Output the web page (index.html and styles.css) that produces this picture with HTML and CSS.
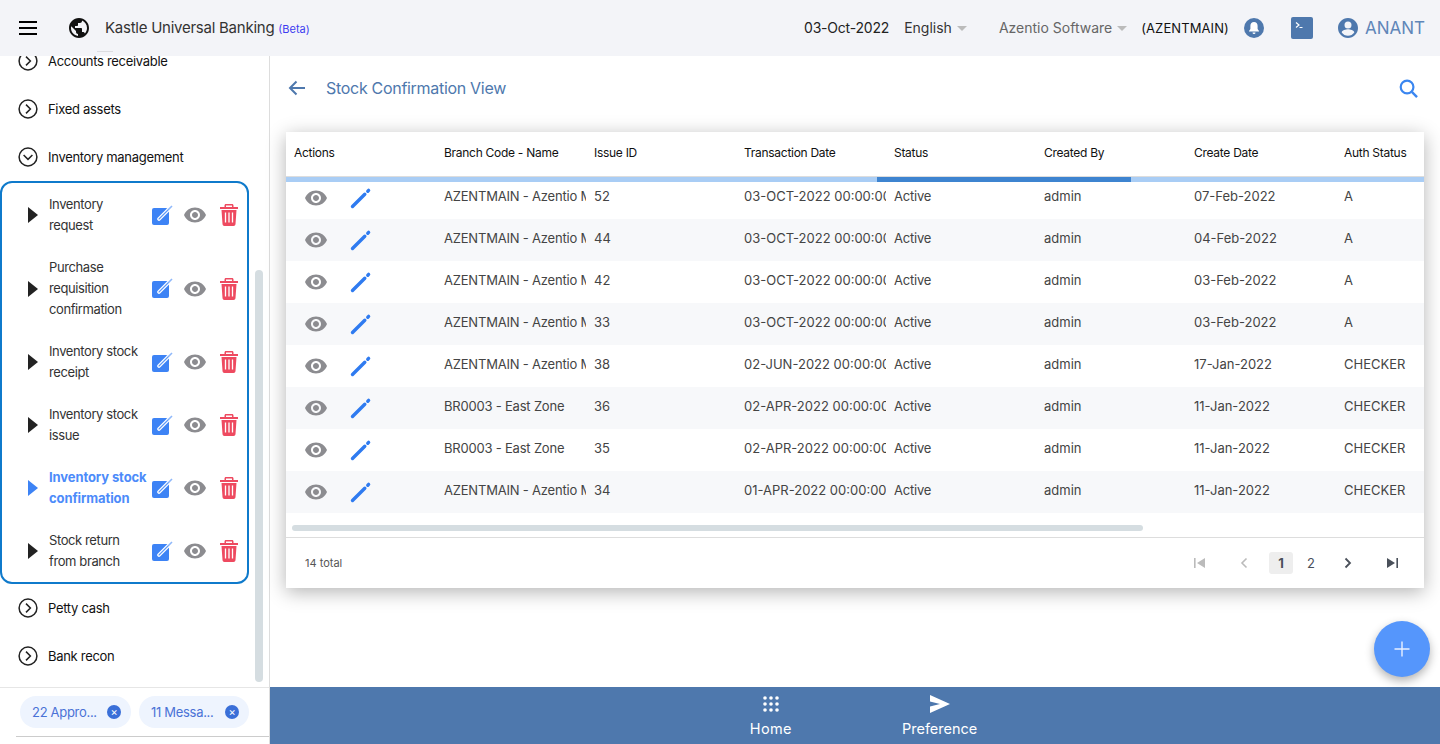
FILE: index.html
```html
<!DOCTYPE html>
<html lang="en">
<head>
    <title>Stock Confirmation View</title>
    <link rel="stylesheet" href="styles.css">
</head>
<body>
    <svg class="icon-defs" width="0" height="0">
        <symbol id="i-eye" viewBox="0 0 24 24"><path d="M12 4.500C7 4.500 2.730 7.610 1 12c1.730 4.390 6 7.500 11 7.500s9.270-3.110 11-7.500c-1.730-4.390-6-7.500-11-7.500zM12 17c-2.760 0-5-2.240-5-5s2.240-5 5-5 5 2.240 5 5-2.240 5-5 5zm0-8c-1.660 0-3 1.340-3 3s1.340 3 3 3 3-1.340 3-3-1.340-3-3-3z"/></symbol>
        <symbol id="i-pencil" viewBox="0 0 22 22"><path fill="none" stroke="#2f7bf0" stroke-width="3.400" stroke-linecap="round" d="M2.500 19.500 14.800 7.200"/><path fill="none" stroke="#2f7bf0" stroke-width="3.400" stroke-linecap="round" d="M17.800 4.200 18.600 3.400"/></symbol>
        <symbol id="i-chev-right" viewBox="0 0 20 20"><circle cx="10" cy="10" r="8.900" fill="none" stroke="#222" stroke-width="1.500"/><path d="M8 5.600 12.400 10 8 14.400" fill="none" stroke="#222" stroke-width="1.500"/></symbol>
        <symbol id="i-chev-down" viewBox="0 0 20 20"><circle cx="10" cy="10" r="8.900" fill="none" stroke="#222" stroke-width="1.500"/><path d="M5.600 8 10 12.400 14.400 8" fill="none" stroke="#222" stroke-width="1.500"/></symbol>
        <symbol id="i-edit-box" viewBox="0 0 21 21"><rect x="0" y="3" width="17" height="17" rx="2" fill="#3d83f5"/><path fill="none" stroke="#fff" stroke-width="3.800" stroke-linecap="round" d="M7 14 16.500 4.500"/><path fill="none" stroke="#5b97f7" stroke-width="1.100" stroke-linecap="round" d="M7 14 16.500 4.500"/><path fill="none" stroke="#8fb8fa" stroke-width="1.600" d="M16.500 4.500 20 1"/></symbol>
        <symbol id="i-trash" viewBox="0 0 18 22"><path fill="#ee4a60" d="M6 0h6c1 0 1.500.6 1.500 1.500V3H18v2H0V3h4.500V1.500C4.500.6 5 0 6 0zm0 1.500V3h6V1.500zM1.500 6h15L15.500 20c-.1 1.200-.8 2-2 2h-9c-1.200 0-1.900-.8-2-2z"/><path fill="none" stroke="#fff" stroke-width="1.300" d="M5.500 8.500v10M9 8.500v10M12.500 8.500v10"/></symbol>
    </svg>

    <header class="topbar">
        <svg class="menu-icon" viewBox="0 0 18 14"><path d="M0 0h18v2H0zM0 6h18v2H0zM0 12h18v2H0z"/></svg>
        <svg class="globe-icon" viewBox="2 2 20 20"><path d="M12 2C6.480 2 2 6.480 2 12s4.480 10 10 10 10-4.480 10-10S17.520 2 12 2zm-1 17.930c-3.950-.49-7-3.850-7-7.930 0-.62.08-1.210.21-1.790L9 15v1c0 1.100.9 2 2 2v1.930zm6.900-2.540c-.26-.81-1-1.390-1.900-1.390h-1v-3c0-.55-.45-1-1-1H8v-2h2c.55 0 1-.45 1-1V7h2c1.100 0 2-.9 2-2v-.41c2.930 1.190 5 4.060 5 7.410 0 2.080-.8 3.970-2.100 5.390z"/></svg>
        <span class="app-name">Kastle Universal Banking</span>
        <span class="beta">(Beta)</span>
        <i class="top-tick"></i>
        <div class="topbar-right">
            <span class="top-date">03-Oct-2022</span>
            <span class="top-lang">English<i class="caret"></i></span>
            <span class="top-company">Azentio Software<i class="caret"></i></span>
            <span class="top-branch">(AZENTMAIN)</span>
            <svg class="bell-icon" viewBox="0 0 20 20"><circle cx="10" cy="10" r="10" fill="#4e78ad"/><path fill="#fff" d="M10 4c-2.200 0-3.600 1.700-3.600 3.800v3.200L5 13v.6h10V13l-1.400-2V7.800C13.600 5.700 12.200 4 10 4zM8.500 14.500a1.500 1.500 0 0 0 3 0z"/></svg>
            <svg class="term-icon" viewBox="0 0 22 22"><rect width="22" height="22" rx="2" fill="#4e78ad"/><path fill="none" stroke="#fff" stroke-width="1.200" d="M5 5.500 8 8 5 10.500M8.500 10.500h3"/></svg>
            <svg class="user-icon" viewBox="2 2 20 20"><path fill="#4e78ad" d="M12 2C6.480 2 2 6.480 2 12s4.480 10 10 10 10-4.480 10-10S17.520 2 12 2zm0 3.500a3.500 3.500 0 1 1 0 7 3.500 3.500 0 0 1 0-7zm0 14.300c-2.600 0-4.900-1.300-6.300-3.300.03-2.100 4.200-3.200 6.300-3.200s6.270 1.100 6.300 3.200c-1.400 2-3.700 3.300-6.300 3.300z"/></svg>
            <span class="top-user">ANANT</span>
        </div>
    </header>

    <div class="layout">
        <aside class="sidebar">
            <div class="side-scroll">
                <div class="side-list">
                    <div class="side-group"><svg class="chev"><use href="#i-chev-right"/></svg>Accounts receivable</div>
                    <div class="side-group"><svg class="chev"><use href="#i-chev-right"/></svg>Fixed assets</div>
                    <div class="side-group"><svg class="chev"><use href="#i-chev-down"/></svg>Inventory management</div>
                    <div class="side-box">
                        <div class="side-item">
                            <i class="tri"></i><span class="side-label">Inventory<br>request</span>
                            <svg class="act-edit"><use href="#i-edit-box"/></svg><svg class="act-eye"><use href="#i-eye"/></svg><svg class="act-trash"><use href="#i-trash"/></svg>
                        </div>
                        <div class="side-item">
                            <i class="tri"></i><span class="side-label">Purchase<br>requisition<br>confirmation</span>
                            <svg class="act-edit"><use href="#i-edit-box"/></svg><svg class="act-eye"><use href="#i-eye"/></svg><svg class="act-trash"><use href="#i-trash"/></svg>
                        </div>
                        <div class="side-item">
                            <i class="tri"></i><span class="side-label">Inventory stock<br>receipt</span>
                            <svg class="act-edit"><use href="#i-edit-box"/></svg><svg class="act-eye"><use href="#i-eye"/></svg><svg class="act-trash"><use href="#i-trash"/></svg>
                        </div>
                        <div class="side-item">
                            <i class="tri"></i><span class="side-label">Inventory stock<br>issue</span>
                            <svg class="act-edit"><use href="#i-edit-box"/></svg><svg class="act-eye"><use href="#i-eye"/></svg><svg class="act-trash"><use href="#i-trash"/></svg>
                        </div>
                        <div class="side-item active">
                            <i class="tri"></i><span class="side-label">Inventory stock<br>confirmation</span>
                            <svg class="act-edit"><use href="#i-edit-box"/></svg><svg class="act-eye"><use href="#i-eye"/></svg><svg class="act-trash"><use href="#i-trash"/></svg>
                        </div>
                        <div class="side-item">
                            <i class="tri"></i><span class="side-label">Stock return<br>from branch</span>
                            <svg class="act-edit"><use href="#i-edit-box"/></svg><svg class="act-eye"><use href="#i-eye"/></svg><svg class="act-trash"><use href="#i-trash"/></svg>
                        </div>
                    </div>
                    <div class="side-group"><svg class="chev"><use href="#i-chev-right"/></svg>Petty cash</div>
                    <div class="side-group"><svg class="chev"><use href="#i-chev-right"/></svg>Bank recon</div>
                </div>
                <div class="side-thumb"></div>
            </div>
            <div class="side-chips">
                <span class="chip">22 Appro...<i class="chip-x">×</i></span>
                <span class="chip">11 Messa...<i class="chip-x">×</i></span>
            </div>
        </aside>

        <div class="content">
            <main class="page">
                <div class="page-head">
                    <svg class="back-icon" viewBox="0 0 18 16"><path fill="none" stroke="#4e78ad" stroke-width="2" d="M17 8H2M8.500 1.500 2 8l6.500 6.500"/></svg>
                    <h1 class="page-title">Stock Confirmation View</h1>
                    <svg class="search-icon" viewBox="0 0 20 20"><circle cx="8.500" cy="8.500" r="6.700" fill="none" stroke="#3a86f0" stroke-width="2.300"/><path stroke="#3a86f0" stroke-width="2.500" d="M13.500 13.500 19 19"/></svg>
                </div>

                <div class="card">
                    <div class="grid-wrap">
                        <table class="grid">
                            <thead>
                                <tr>
                                    <th>Actions</th>
                                    <th>Branch Code - Name</th>
                                    <th>Issue ID</th>
                                    <th>Transaction Date</th>
                                    <th>Status</th>
                                    <th>Created By</th>
                                    <th>Create Date</th>
                                    <th>Auth Status</th>
                                </tr>
                            </thead>
                            <tbody>
                                <tr>
                                    <td class="actions"><svg class="row-eye"><use href="#i-eye"/></svg><svg class="row-pencil"><use href="#i-pencil"/></svg></td>
                                    <td><div class="cell">AZENTMAIN - Azentio Main Branch</div></td><td><div class="cell">52</div></td><td><div class="cell">03-OCT-2022 00:00:00</div></td><td><div class="cell">Active</div></td><td><div class="cell">admin</div></td><td><div class="cell">07-Feb-2022</div></td><td><div class="cell">A</div></td>
                                </tr>
                                <tr>
                                    <td class="actions"><svg class="row-eye"><use href="#i-eye"/></svg><svg class="row-pencil"><use href="#i-pencil"/></svg></td>
                                    <td><div class="cell">AZENTMAIN - Azentio Main Branch</div></td><td><div class="cell">44</div></td><td><div class="cell">03-OCT-2022 00:00:00</div></td><td><div class="cell">Active</div></td><td><div class="cell">admin</div></td><td><div class="cell">04-Feb-2022</div></td><td><div class="cell">A</div></td>
                                </tr>
                                <tr>
                                    <td class="actions"><svg class="row-eye"><use href="#i-eye"/></svg><svg class="row-pencil"><use href="#i-pencil"/></svg></td>
                                    <td><div class="cell">AZENTMAIN - Azentio Main Branch</div></td><td><div class="cell">42</div></td><td><div class="cell">03-OCT-2022 00:00:00</div></td><td><div class="cell">Active</div></td><td><div class="cell">admin</div></td><td><div class="cell">03-Feb-2022</div></td><td><div class="cell">A</div></td>
                                </tr>
                                <tr>
                                    <td class="actions"><svg class="row-eye"><use href="#i-eye"/></svg><svg class="row-pencil"><use href="#i-pencil"/></svg></td>
                                    <td><div class="cell">AZENTMAIN - Azentio Main Branch</div></td><td><div class="cell">33</div></td><td><div class="cell">03-OCT-2022 00:00:00</div></td><td><div class="cell">Active</div></td><td><div class="cell">admin</div></td><td><div class="cell">03-Feb-2022</div></td><td><div class="cell">A</div></td>
                                </tr>
                                <tr>
                                    <td class="actions"><svg class="row-eye"><use href="#i-eye"/></svg><svg class="row-pencil"><use href="#i-pencil"/></svg></td>
                                    <td><div class="cell">AZENTMAIN - Azentio Main Branch</div></td><td><div class="cell">38</div></td><td><div class="cell">02-JUN-2022 00:00:00</div></td><td><div class="cell">Active</div></td><td><div class="cell">admin</div></td><td><div class="cell">17-Jan-2022</div></td><td><div class="cell">CHECKER</div></td>
                                </tr>
                                <tr>
                                    <td class="actions"><svg class="row-eye"><use href="#i-eye"/></svg><svg class="row-pencil"><use href="#i-pencil"/></svg></td>
                                    <td><div class="cell">BR0003 - East Zone</div></td><td><div class="cell">36</div></td><td><div class="cell">02-APR-2022 00:00:00</div></td><td><div class="cell">Active</div></td><td><div class="cell">admin</div></td><td><div class="cell">11-Jan-2022</div></td><td><div class="cell">CHECKER</div></td>
                                </tr>
                                <tr>
                                    <td class="actions"><svg class="row-eye"><use href="#i-eye"/></svg><svg class="row-pencil"><use href="#i-pencil"/></svg></td>
                                    <td><div class="cell">BR0003 - East Zone</div></td><td><div class="cell">35</div></td><td><div class="cell">02-APR-2022 00:00:00</div></td><td><div class="cell">Active</div></td><td><div class="cell">admin</div></td><td><div class="cell">11-Jan-2022</div></td><td><div class="cell">CHECKER</div></td>
                                </tr>
                                <tr>
                                    <td class="actions"><svg class="row-eye"><use href="#i-eye"/></svg><svg class="row-pencil"><use href="#i-pencil"/></svg></td>
                                    <td><div class="cell">AZENTMAIN - Azentio Main Branch</div></td><td><div class="cell">34</div></td><td><div class="cell">01-APR-2022 00:00:00</div></td><td><div class="cell">Active</div></td><td><div class="cell">admin</div></td><td><div class="cell">11-Jan-2022</div></td><td><div class="cell">CHECKER</div></td>
                                </tr>
                            </tbody>
                        </table>
                        <div class="progress"><div class="progress-bar"></div></div>
                    </div>
                    <div class="h-scroll"><div class="h-thumb"></div></div>
                    <div class="card-foot">
                        <span class="total">14 total</span>
                        <div class="pager">
                            <svg class="pg-icon off" viewBox="0 0 12 12"><path d="M0 1h1.600v10H0zM11 1v10L3 6z"/></svg>
                            <svg class="pg-icon off" viewBox="0 0 12 12"><path fill="none" stroke="currentColor" stroke-width="1.600" d="M8.500 1.500 4 6l4.500 4.500"/></svg>
                            <span class="pg-num current">1</span>
                            <span class="pg-num">2</span>
                            <svg class="pg-icon pg-next" viewBox="0 0 12 12"><path fill="none" stroke="currentColor" stroke-width="1.800" d="M3.500 1.500 8 6l-4.500 4.500"/></svg>
                            <svg class="pg-icon" viewBox="0 0 12 12"><path d="M10.400 1H12v10h-1.600zM1 1v10l8-5z"/></svg>
                        </div>
                    </div>
                </div>
                <div class="fab"><svg viewBox="0 0 16 16"><path fill="none" stroke="#e8f0ff" stroke-width="1.400" d="M8 .5v15M.5 8h15"/></svg></div>
            </main>

            <footer class="bottom-bar">
                <div class="bottom-item">
                    <svg class="home-icon" viewBox="0 0 18 18"><g fill="#fff"><circle cx="3" cy="3" r="1.800"/><circle cx="9" cy="3" r="1.800"/><circle cx="15" cy="3" r="1.800"/><circle cx="3" cy="9" r="1.800"/><circle cx="9" cy="9" r="1.800"/><circle cx="15" cy="9" r="1.800"/><circle cx="3" cy="15" r="1.800"/><circle cx="9" cy="15" r="1.800"/><circle cx="15" cy="15" r="1.800"/></g></svg>
                    Home
                </div>
                <div class="bottom-item">
                    <svg class="pref-icon" viewBox="0 0 20 18"><path fill="#fff" d="M0 0 20 9 0 18v-6.500L10 9 0 6.500z"/></svg>
                    Preference
                </div>
            </footer>
        </div>
    </div>
</body>
</html>
```

FILE: styles.css
```css
* {
    box-sizing: border-box;
}
html, body {
    margin: 0;
    height: 744px;
    overflow: hidden;
}
body {
    font-family: Inter, "Liberation Sans", sans-serif;
    font-size: 13px;
    color: #111;
    background: #fff;
}
.icon-defs {
    position: absolute;
}

/* top bar */
.topbar {
    height: 56px;
    background: #f3f4f8;
    display: flex;
    align-items: center;
    padding: 0 0 1px 19px;
    position: relative;
}
.top-tick {
    position: absolute;
    left: 97px;
    top: 51px;
    width: 16px;
    height: 1px;
    background: #dcdde0;
}
.menu-icon {
    width: 18px;
    height: 14px;
    fill: #000;
}
.globe-icon {
    width: 20px;
    height: 20px;
    margin-left: 32px;
    fill: #111;
}
.app-name {
    margin-left: 16px;
    font-size: 15px;
    letter-spacing: -0.25px;
    color: #333;
}
.beta {
    margin-left: 4px;
    margin-top: 3px;
    font-size: 11px;
    color: #3d3df0;
}
.topbar-right {
    margin-left: auto;
    display: flex;
    align-items: center;
    padding-right: 15px;
    font-size: 14px;
    color: #333;
}
.top-date {
    color: #222;
    letter-spacing: -0.2px;
}
.top-lang {
    margin-left: 15px;
}
.top-company {
    margin-left: 32px;
    color: #666;
}
.caret {
    display: inline-block;
    margin-left: 5px;
    margin-bottom: 2px;
    border-left: 5px solid transparent;
    border-right: 5px solid transparent;
    border-top: 5px solid #bbb;
}
.top-branch {
    margin-left: 14px;
    font-size: 13px;
    letter-spacing: 0.1px;
    color: #111;
}
.bell-icon {
    width: 20px;
    height: 20px;
    margin-left: 15px;
}
.term-icon {
    width: 22px;
    height: 22px;
    margin-left: 27px;
}
.user-icon {
    width: 20px;
    height: 20px;
    margin-left: 25px;
}
.top-user {
    margin-left: 7px;
    font-size: 17px;
    color: #5f86b8;
}

/* main layout */
.layout {
    display: flex;
    height: 688px;
}
.sidebar {
    width: 270px;
    flex: none;
    border-right: 1px solid #ddd;
    display: flex;
    flex-direction: column;
}
.side-scroll {
    flex: 1;
    min-height: 0;
    overflow: hidden;
    position: relative;
    border-bottom: 1px solid #e6e6e6;
}
.side-list {
    width: 249px;
    margin-top: -19px;
    font-size: 13px;
    letter-spacing: -0.3px;
}
.side-group {
    height: 48px;
    display: flex;
    align-items: center;
    gap: 10px;
    padding-left: 18px;
}
.chev {
    width: 20px;
    height: 20px;
}
.side-box {
    border: 2px solid #0f7acb;
    border-radius: 12px;
    padding: 11px 0 10px;
    display: flex;
    flex-direction: column;
    gap: 21px;
}
.side-item {
    display: flex;
    align-items: center;
    line-height: 21px;
    color: #333;
    letter-spacing: -0.4px;
}
.tri {
    margin-left: 26px;
    border-top: 8px solid transparent;
    border-bottom: 8px solid transparent;
    border-left: 10px solid #222;
}
.side-label {
    width: 103px;
    margin-left: 11px;
    flex: none;
}
.active .side-label {
    color: #4c8bfa;
    font-weight: 700;
    letter-spacing: -0.1px;
}
.active .tri {
    border-left-color: #3d83f5;
}
.act-edit {
    width: 21px;
    height: 21px;
}
.act-eye {
    width: 24px;
    height: 24px;
    margin-left: 10px;
    fill: #8c8c90;
}
.act-trash {
    width: 18px;
    height: 22px;
    margin-left: 13px;
}
.side-thumb {
    position: absolute;
    left: 255px;
    top: 214px;
    width: 8px;
    height: 412px;
    border-radius: 4px;
    background: #d5dde1;
}
.side-chips {
    flex: none;
    height: 49px;
    margin: 0 0 7px 16px;
    padding: 8px 0 0 4px;
    border-bottom: 1px solid #ccc;
    display: flex;
    gap: 8px;
}
.chip {
    width: 110px;
    height: 32px;
    border-radius: 16px;
    background: #eef4fe;
    color: #4a72d6;
    display: flex;
    align-items: center;
    justify-content: space-between;
    padding: 0 10px 0 12px;
    font-size: 13px;
    letter-spacing: -0.3px;
}
.chip:first-child {
    width: 111px;
}
.chip-x {
    width: 14px;
    height: 14px;
    border-radius: 50%;
    background: #3a6fd8;
    color: #fff;
    font-style: normal;
    font-size: 11px;
    line-height: 14px;
    text-align: center;
}

/* page */
.content {
    flex: 1;
    min-width: 0;
    display: flex;
    flex-direction: column;
}
.page {
    flex: 1;
    min-height: 0;
    position: relative;
    padding: 0 16px;
}
.page-head {
    height: 76px;
    display: flex;
    align-items: center;
    padding: 0 6px 12px 2px;
    color: #4e78ad;
}
.back-icon {
    width: 18px;
    height: 16px;
}
.page-title {
    margin: 0 0 0 20px;
    font-size: 16px;
    font-weight: 400;
    letter-spacing: -0.3px;
}
.search-icon {
    width: 19px;
    height: 19px;
    margin-left: auto;
}
.card {
    width: 1138px;
    height: 456px;
    background: #fff;
    box-shadow: 0 4px 18px rgba(0, 0, 0, 0.3);
    display: flex;
    flex-direction: column;
}
.grid-wrap {
    height: 381px;
    overflow: hidden;
    position: relative;
    flex: none;
}
.grid {
    width: 1200px;
    table-layout: fixed;
    border-collapse: separate;
    border-spacing: 0;
    font-size: 13px;
}
.grid th {
    height: 45px;
    padding: 0 8px 4px;
    text-align: left;
    font-weight: 400;
    font-size: 12px;
    letter-spacing: -0.28px;
    color: #111;
    border-bottom: 1px solid #ddd;
}
.grid td {
    height: 42px;
    padding: 0 0 5px 8px;
    color: #444;
}
.grid td:nth-child(2), .grid td:nth-child(5) {
    letter-spacing: -0.2px;
}
.grid tbody tr:nth-child(even) {
    background: #f7f8fa;
}
.cell {
    white-space: nowrap;
    overflow: hidden;
}
.grid td.actions {
    padding: 0 0 0 18px;
    vertical-align: top;
}
.row-eye {
    width: 24px;
    height: 24px;
    margin-top: 9px;
    vertical-align: top;
    fill: #8c8c90;
}
.row-pencil {
    width: 22px;
    height: 22px;
    margin: 10px 0 0 22px;
    vertical-align: top;
}
.progress {
    position: absolute;
    left: 0;
    right: 0;
    top: 45px;
    height: 5px;
    background: #a9cdf5;
}
.progress-bar {
    width: 254px;
    height: 5px;
    margin-left: 591px;
    background: #3e84d0;
}
.h-scroll {
    height: 24px;
    padding: 12px 0 0 6px;
    flex: none;
}
.h-thumb {
    width: 851px;
    height: 6px;
    border-radius: 3px;
    background: #d5dde1;
}
.card-foot {
    flex: 1;
    border-top: 1px solid #ddd;
    display: flex;
    align-items: center;
    justify-content: space-between;
    padding: 0 26px 0 19px;
}
.total {
    font-size: 11px;
    color: #555;
}
.pager {
    display: flex;
    align-items: center;
    color: #4a505a;
    font-size: 13px;
}
.pg-icon {
    width: 12px;
    height: 12px;
    fill: currentColor;
    margin-left: 32px;
}
.pg-icon.off {
    color: #bbb;
}
.pg-icon.pg-next {
    margin-left: 19px;
}
.pg-num {
    width: 24px;
    height: 22px;
    line-height: 22px;
    text-align: center;
    margin-left: 6px;
}
.pg-num.current {
    margin-left: 19px;
    background: #eee;
    border-radius: 3px;
    font-weight: 700;
}
.fab {
    position: absolute;
    left: 1104px;
    top: 565px;
    width: 56px;
    height: 56px;
    border-radius: 50%;
    background: #5596fc;
    box-shadow: 0 4px 10px rgba(0, 0, 0, 0.3);
    display: flex;
    align-items: center;
    justify-content: center;
}
.fab svg {
    width: 16px;
    height: 16px;
}

/* bottom bar */
.bottom-bar {
    height: 57px;
    flex: none;
    background: #4e78ad;
    color: #fff;
    display: flex;
    justify-content: center;
    gap: 110px;
    padding: 8px 0 0 17px;
    font-size: 14.5px;
}
.bottom-item {
    display: flex;
    flex-direction: column;
    align-items: center;
    gap: 7px;
}
.bottom-item:first-child {
    letter-spacing: 0.4px;
}
.home-icon {
    width: 18px;
    height: 18px;
}
.pref-icon {
    width: 20px;
    height: 18px;
}
```
